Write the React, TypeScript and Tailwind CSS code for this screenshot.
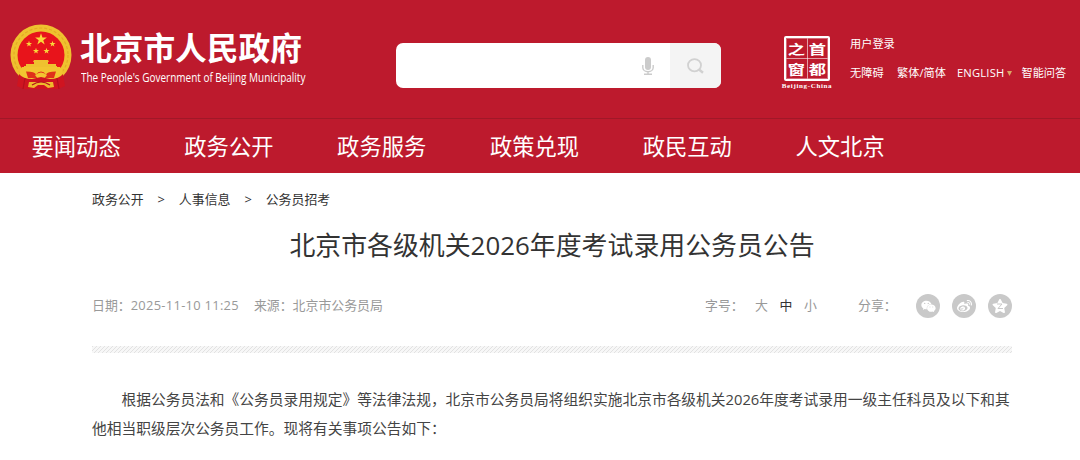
import { FaStar, FaWeibo, FaWeixin } from 'react-icons/fa';

const NAV = ['要闻动态', '政务公开', '政务服务', '政策兑现', '政民互动', '人文北京'];
const CRUMBS = ['政务公开', '人事信息', '公务员招考'];

const STAR = 'M0-10 2.3-3.1H9.5L3.7 1.2 5.9 8.1 0 3.8-5.9 8.1-3.7 1.2-9.5-3.1H-2.3Z';

const Emblem = () => (
  <svg width="62" height="68" viewBox="0 0 62 68">
    <circle cx="31" cy="31" r="30.5" fill="#efc12f" />
    <circle cx="31" cy="31" r="27" fill="none" stroke="#e3ac24" strokeWidth="1.2" strokeDasharray="3 2" />
    <circle cx="31" cy="31" r="23.500" fill="#e8141b" />
    <g fill="#f9d93a">
      <path d={STAR} transform="translate(31 15.500) scale(.62)" />
      <path d={STAR} transform="translate(19 20) scale(.32)" />
      <path d={STAR} transform="translate(42.500 20) scale(.32)" />
      <path d={STAR} transform="translate(26 27) scale(.32)" />
      <path d={STAR} transform="translate(36.500 27) scale(.32)" />
    </g>
    <path d="M24 36h14l1 2h-1v2h8v2h1v3H14v-3h2v-2h8v-2h-1Z" fill="#efc12f" />
    <path d="M12 43h38l3 4-5 9H14l-5-9Z" fill="#f2c531" />
    <path d="M16 47.500q9 0 10 3 2-3 5-3t5 3q1-3 10-3l-2 6.500H18Z" fill="#e0301a" />
    <path d="M25 51q6-5 12 0l-3 4h-6Z" fill="#f2c531" />
    <path d="M9 50q4 5 13 5l9-2 9 2q9 0 13-5l2 12-7 3H14l-7-3Z" fill="#cf1420" />
    <path d="M19 58h24l1 5-6 1-4-3h-6l-4 3-6-1Z" fill="#efb92c" />
    <path d="M22 61q9-6 18 0M15 54l-2 11M47 54l2 11" fill="none" stroke="#b30f1d" strokeWidth="1.200" />
  </svg>
);

const MicIcon = () => (
  <svg width="12" height="18" viewBox="0 0 12 18" fill="none" stroke="#cbcbcb">
    <rect x="3" y="0" width="6" height="13" rx="3" fill="#cbcbcb" stroke="none" />
    <path d="M.8 8v2.500a5.200 4.200 0 0 0 10.400 0V8M6 15v2M2 17.300h8" strokeWidth="1.400" />
  </svg>
);

const SearchIcon = () => (
  <svg width="17" height="16" viewBox="0 0 17 16" fill="none" stroke="#d1d1d1" strokeWidth="1.800">
    <ellipse cx="7.500" cy="7.200" rx="6.500" ry="6.100" />
    <path d="m12 11.500 4 3.300" strokeWidth="2.400" />
  </svg>
);

const Seal = () => (
  <div className="flex w-[52px] flex-col items-center">
    <div className="h-[45px] w-[46px] rounded-[2px] border-[2.500px] border-white p-px">
      <div className="grid h-full grid-cols-2 grid-rows-2 gap-px text-[15px] leading-[18px] font-bold">
        {['之', '首', '窗', '都'].map((c) => (
          <span key={c} className="flex items-center justify-center outline-1 outline-white/35">
            <span className="scale-x-[1.15] scale-y-[.85]">{c}</span>
          </span>
        ))}
      </div>
    </div>
    <span className="mt-px font-['Liberation_Serif',serif] text-[7px] leading-[8px] font-bold tracking-[0.650px] whitespace-nowrap">
      Beijing-China
    </span>
  </div>
);

export default function App() {
  return (
    <div
      lang="zh-CN"
      className="h-[460px] w-[1080px] overflow-hidden bg-white font-['Open_Sans','Noto_Sans_CJK_SC',sans-serif] text-[12.900px] text-[#333]"
    >
      <header className="h-[173px] bg-[#bd1a2d] text-white">
        <div className="flex h-[118px] items-start pl-[10px]">
          <div className="mt-[24px]">
            <Emblem />
          </div>
          <div className="mt-[30px] ml-[8px] w-[316px]">
            <h1 className="text-[31.700px] leading-[36px] font-bold whitespace-nowrap">北京市人民政府</h1>
            <p className="mt-[2px] ml-px w-max origin-left scale-x-[.832] text-[12px] leading-[20px] whitespace-nowrap">
              The People's Government of Beijing Municipality
            </p>
          </div>
          <div className="mt-[43px] flex h-[45px] w-[325px] overflow-hidden rounded-[7px] bg-white">
            <div className="flex flex-1 items-center justify-end pr-[16px]">
              <MicIcon />
            </div>
            <div className="flex w-[51px] items-center justify-center bg-[#f4f4f4]">
              <SearchIcon />
            </div>
          </div>
          <div className="mt-[36px] ml-[60px]">
            <Seal />
          </div>
          <div className="mt-[34px] ml-[17px] text-[11.200px] leading-[20px] whitespace-nowrap">
            <div>用户登录</div>
            <div className="mt-[9px] flex items-center">
              <span>无障碍</span>
              <span className="ml-[13.500px]">繁体/简体</span>
              <span className="ml-[11px] tracking-[0.200px]">ENGLISH</span>
              <svg className="ml-[3px]" width="5" height="5" viewBox="0 0 5 5">
                <path d="M0 0h5L2.500 5Z" fill="#dba765" />
              </svg>
              <span className="ml-[9px]">智能问答</span>
            </div>
          </div>
        </div>
        <nav className="flex h-[55px] border-t border-[#a01828] pl-[31.500px] text-[22.300px] leading-[55px]">
          {NAV.map((item) => (
            <a key={item} className="w-[152.800px] whitespace-nowrap">
              {item}
            </a>
          ))}
        </nav>
      </header>

      <main className="ml-[92px] w-[920px]">
        <div className="flex h-[20px] pt-[16px] leading-[20px]">
          {CRUMBS.map((c, i) => (
            <span key={c} className="flex">
              {i > 0 && <span className="w-[35.300px] pl-[14px]">&gt;</span>}
              {c}
            </span>
          ))}
        </div>
        <h2 className="mt-[32px] text-center text-[25.900px] leading-[40px]">
          北京市各级机关2026年度考试录用公务员公告
        </h2>
        <div className="mt-[29px] flex h-[24px] items-center text-[#999]">
          <span>
            日期：<span className="tracking-[0.300px]">2025-11-10 11:25</span>
          </span>
          <span className="ml-[15px]">来源：北京市公务员局</span>
          <div className="ml-auto flex items-center">
            <span className="w-[50px]">字号：</span>
            <span className="w-[24.500px]">大</span>
            <span className="w-[24.500px] text-[#333]">中</span>
            <span className="w-[54px]">小</span>
            <span className="w-[58px]">分享：</span>
            <div className="flex gap-[12px] text-white">
              <span className="flex size-[24px] items-center justify-center rounded-full bg-[#c9c9c9]">
                <FaWeixin size={15} />
              </span>
              <span className="flex size-[24px] items-center justify-center rounded-full bg-[#c9c9c9]">
                <FaWeibo size={15} />
              </span>
              <span className="relative flex size-[24px] items-center justify-center rounded-full bg-[#c9c9c9]">
                <FaStar size={16} />
                <svg className="absolute top-[9px] left-[9px]" width="6" height="7" viewBox="0 0 6 7" fill="none" stroke="#c9c9c9">
                  <path d="M0 1h5L1 5.500h5" />
                </svg>
              </span>
            </div>
          </div>
        </div>
        <div className="mt-[28px] h-[7px] bg-[repeating-linear-gradient(135deg,#e2e2e2_0_1px,#f7f7f7_1px_2.830px)]" />
        <p className="mt-[32px] indent-[2em] text-[14.740px] leading-[29.400px] text-[#444]">
          <span className="block whitespace-nowrap">
            根据公务员法和《公务员录用规定》等法律法规，北京市公务员局将组织实施北京市各级机关2026年度考试录用一级主任科员及以下和其
          </span>
          <span className="block indent-0 whitespace-nowrap">他相当职级层次公务员工作。现将有关事项公告如下：</span>
        </p>
      </main>
    </div>
  );
}
